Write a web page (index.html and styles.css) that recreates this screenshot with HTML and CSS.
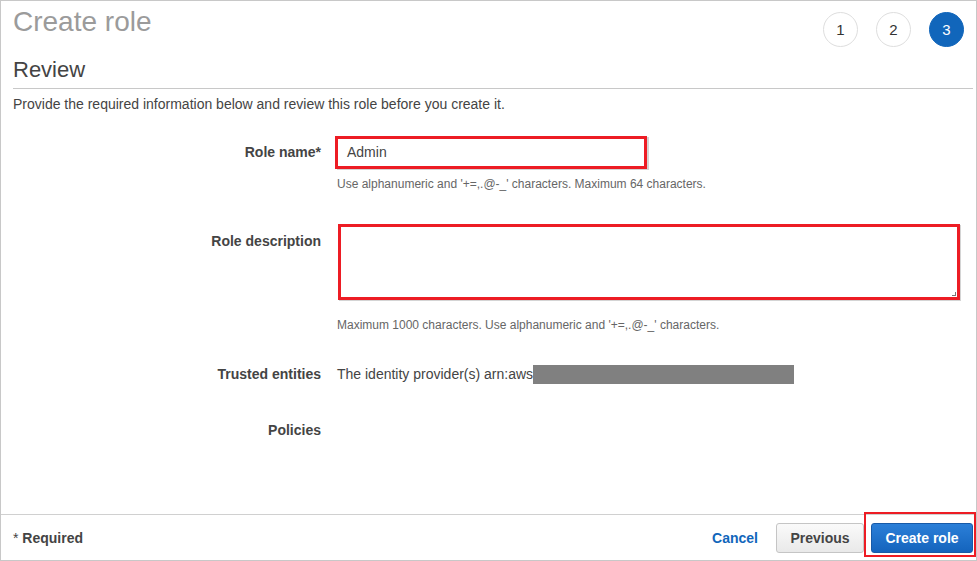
FILE: index.html
```html
<!DOCTYPE html>
<html>
<head>
<meta charset="utf-8">
<link rel="stylesheet" href="styles.css">
</head>
<body>
<div class="page">
  <div class="header">
    <h1 class="title">Create role</h1>
    <div class="steps">
      <span class="step">1</span>
      <span class="step">2</span>
      <span class="step active">3</span>
    </div>
  </div>
  <h2 class="section">Review</h2>
  <p class="intro">Provide the required information below and review this role before you create it.</p>

  <div class="row row-name">
    <div class="label">Role name*</div>
    <div class="control">
      <div class="input">Admin</div>
      <div class="help help-name">Use alphanumeric and '+=,.@-_' characters. Maximum 64 characters.</div>
    </div>
  </div>

  <div class="row row-desc">
    <div class="label label-desc">Role description</div>
    <div class="control">
      <div class="textarea"><span class="grip"></span></div>
      <div class="help help-desc">Maximum 1000 characters. Use alphanumeric and '+=,.@-_' characters.</div>
    </div>
  </div>

  <div class="row row-trusted">
    <div class="label">Trusted entities</div>
    <div class="control value">The identity provider(s) arn:aws<span class="redact"></span></div>
  </div>

  <div class="row row-policies">
    <div class="label">Policies</div>
    <div class="control value"></div>
  </div>

  <div class="spacer"></div>

  <div class="footer">
    <div class="required"><span class="star">*</span> Required</div>
    <div class="actions">
      <a class="cancel">Cancel</a>
      <button class="btn btn-secondary">Previous</button>
      <button class="btn btn-primary">Create role<span class="highlight"></span></button>
    </div>
  </div>
</div>
</body>
</html>
```
FILE: styles.css
```css
* { box-sizing: border-box; }
html, body { margin: 0; padding: 0; background: #fff; }
body {
  font-family: "Liberation Sans", Arial, sans-serif;
  color: #444;
  font-size: 13px;
}
.page {
  width: 977px;
  height: 561px;
  border: 1px solid #c8c8c8;
  display: flex;
  flex-direction: column;
}
.header {
  display: flex;
  justify-content: space-between;
  align-items: flex-start;
  padding: 0 12px 0 12px;
}
.title {
  margin: 5px 0 0 0;
  font-size: 28px;
  line-height: 32px;
  font-weight: normal;
  color: #9b9b9b;
}
.steps {
  display: flex;
  gap: 18px;
  margin-top: 11px;
}
.step {
  width: 35px;
  height: 35px;
  border-radius: 50%;
  border: 1px solid #dedede;
  display: flex;
  align-items: center;
  justify-content: center;
  font-size: 15px;
  color: #333;
}
.step.active {
  background: #1166bb;
  border-color: #1166bb;
  color: #fff;
}
.section {
  margin: 10px 3px 0 12px;
  font-size: 22px;
  line-height: 26px;
  font-weight: normal;
  color: #444;
  padding-bottom: 5px;
  border-bottom: 1px solid #c8c8c8;
}
.intro {
  margin: 6px 0 0 12px;
  font-size: 14px;
  line-height: 18px;
  color: #444;
}
.row {
  display: flex;
  align-items: flex-start;
  gap: 14px;
}
.label {
  width: 320px;
  text-align: right;
  font-weight: bold;
  color: #444;
  font-size: 14px;
}
.control { flex: 1; }
.row-name { margin-top: 23px; }
.row-name .label { line-height: 33px; }
.input {
  width: 312px;
  height: 33px;
  border: 3px solid #ed1c24;
  box-shadow: 2px 1px 0 #d4d4d4;
  padding: 0 9px;
  line-height: 27px;
  font-size: 14px;
  color: #444;
}
.help {
  font-size: 12px;
  line-height: 14px;
  color: #666;
  padding-left: 2px;
}
.help-name { margin-top: 8px; }
.row-desc { margin-top: 33px; }
.label-desc { padding-top: 8px; line-height: 18px; }
.textarea {
  position: relative;
  margin-left: 3px;
  width: 622px;
  height: 76px;
  border: 3px solid #ed1c24;
  box-shadow: 1px 1px 0 #d4d4d4;
}
.grip {
  position: absolute;
  right: 1px;
  bottom: 1px;
  width: 4px;
  height: 4px;
  border-right: 1px solid #777;
  border-bottom: 1px solid #777;
}
.help-desc { margin-top: 18px; }
.row-trusted { margin-top: 32px; line-height: 20px; }
.row-trusted .label, .row-policies .label { line-height: 20px; }
.value {
  font-size: 14px;
  line-height: 20px;
  color: #444;
  padding-left: 2px;
  display: flex;
  align-items: center;
}
.redact {
  display: inline-block;
  width: 261px;
  height: 19px;
  background: #808080;
}
.row-policies { margin-top: 36px; }
.spacer { flex: 1; }
.footer {
  height: 46px;
  border-top: 1px solid #d0d0d0;
  display: flex;
  justify-content: space-between;
  align-items: center;
  padding: 0 3px 0 12px;
}
.required {
  font-weight: bold;
  font-size: 14px;
  color: #444;
}
.required .star { font-weight: normal; }
.actions {
  display: flex;
  align-items: center;
  margin-top: 1px;
}
.cancel {
  color: #1166bb;
  font-weight: bold;
  font-size: 14px;
  margin-right: 18px;
}
.btn {
  height: 30px;
  font-family: "Liberation Sans", Arial, sans-serif;
  font-weight: bold;
  font-size: 14px;
  border-radius: 3px;
  padding: 0;
  cursor: pointer;
}
.btn-secondary {
  width: 88px;
  background: linear-gradient(#fafafa, #e9e9e9);
  border: 1px solid #c5c5c5;
  color: #444;
  margin-right: 7px;
}
.btn-primary {
  position: relative;
  width: 102px;
  background: linear-gradient(#2b7fd8, #1464bd);
  border: 1px solid #175aa8;
  color: #fff;
}
.highlight {
  position: absolute;
  top: -12px;
  left: -8px;
  right: -4px;
  bottom: -5px;
  border: 2px solid #ed1c24;
  pointer-events: none;
}
```
